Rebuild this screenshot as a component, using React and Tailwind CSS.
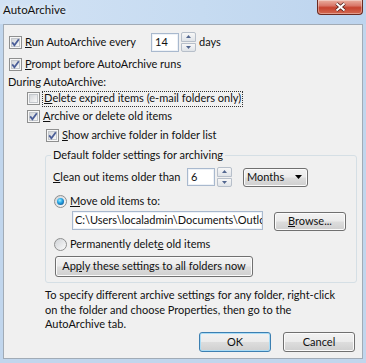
import React from "react";

function Check({ checked }) {
  return (
    <span className="grid w-[13px] h-[13px] shrink-0">
      <span className="col-start-1 row-start-1 border border-[#8e8f8f] bg-[#f7f7f7] p-[1px]">
        <span className="block w-full h-full border border-[#c3c7cc] bg-[linear-gradient(135deg,#d3d6da,#f8f8f8)]" />
      </span>
      {checked && (
        <svg
          className="col-start-1 row-start-1 self-center justify-self-center"
          width="11"
          height="11"
          viewBox="0 0 11 11"
        >
          <path d="M2.2 5.4 L4.4 8.2 L8.8 2.2" stroke="#4b5e98" strokeWidth="1.8" fill="none" />
        </svg>
      )}
    </span>
  );
}

function Radio({ checked }) {
  return (
    <span className="w-[13px] h-[13px] shrink-0 rounded-full border border-[#8e8f8f] bg-[linear-gradient(135deg,#cfd2d6,#fbfbfb)] flex items-center justify-center">
      {checked && (
        <span className="w-[7px] h-[7px] rounded-full bg-[radial-gradient(circle_at_40%_35%,#9ff0ff_0%,#27a6e6_40%,#0b3d78_100%)]" />
      )}
    </span>
  );
}

function TextBox({ className, children }) {
  return (
    <div
      className={`${className} flex items-center border border-[#a9b9ce] bg-white overflow-hidden whitespace-nowrap shadow-[inset_0_0_0_1px_#eef2f7]`}
    >
      {children}
    </div>
  );
}

function Spin() {
  return (
    <div className="ml-[2px] w-[15px] h-[20px] flex flex-col gap-[1px]">
      <div className="flex-1 border border-[#b7bfca] rounded-t-[2px] bg-[linear-gradient(#f7f7f7,#dfe3e8)] flex items-center justify-center">
        <svg width="5" height="3" viewBox="0 0 5 3">
          <path d="M0 3 L2.5 0 L5 3 Z" fill="#52668f" />
        </svg>
      </div>
      <div className="flex-1 border border-[#b7bfca] rounded-b-[2px] bg-[linear-gradient(#f7f7f7,#dfe3e8)] flex items-center justify-center">
        <svg width="5" height="3" viewBox="0 0 5 3">
          <path d="M0 0 L5 0 L2.5 3 Z" fill="#52668f" />
        </svg>
      </div>
    </div>
  );
}

function Btn({ def, className, children }) {
  return (
    <div
      className={`${className} flex items-center justify-center rounded-[3px] border ${
        def
          ? "border-[#3c7fb1] shadow-[inset_0_0_0_1px_#a9dcf6]"
          : "border-[#707070] shadow-[inset_0_0_0_1px_#fbfbfb]"
      } bg-[linear-gradient(#f2f2f2_0%,#ebebeb_49%,#dddddd_51%,#cfcfcf_100%)] whitespace-nowrap`}
    >
      {children}
    </div>
  );
}

export default function App() {
  return (
    <div className="w-[366px] h-[363px] flex flex-col bg-[#c1d6ed] font-['Lato',sans-serif] text-[11px] text-[#111111] overflow-hidden">
      {/* title bar */}
      <div className="h-[24px] flex items-start justify-between bg-[linear-gradient(90deg,#d2e2f4,#c6dbf1_55%,#bdd4ee)]">
        <span className="pl-[3px] pt-[2px] leading-[16px] text-[11.5px] [text-shadow:0_0_6px_#ffffff]">
          AutoArchive
        </span>
        <div className="mr-[3px] w-[46px] h-[15px] rounded-b-[4px] border border-t-0 border-[#6b2a20] bg-[linear-gradient(#eab0a0,#d9786a_40%,#c6432f_55%,#d46a52_100%)] shadow-[inset_0_0_0_1px_rgba(255,255,255,0.35)] flex items-center justify-center">
          <svg width="13" height="10" viewBox="0 0 13 10">
            <path d="M2.5 1.5 L10.5 8.5 M10.5 1.5 L2.5 8.5" stroke="#4a1c16" strokeWidth="3.6" fill="none" />
            <path d="M2.5 1.5 L10.5 8.5 M10.5 1.5 L2.5 8.5" stroke="#ffffff" strokeWidth="2" fill="none" />
          </svg>
        </div>
      </div>

      {/* client area */}
      <div className="mx-[3px] h-[335px] border border-[#a1abb6] bg-[#f0f0f0] flex flex-col">
        <div className="mt-[7px] ml-[5px] h-[20px] flex items-center">
          <Check checked />
          <span className="ml-[3px] w-[126px] whitespace-nowrap">
            <span className="underline">R</span>un AutoArchive every
          </span>
          <TextBox className="w-[28px] h-[19px] pl-[3px]">14</TextBox>
          <Spin />
          <span className="ml-[3px]">days</span>
        </div>

        <div className="mt-[2px] ml-[5px] h-[20px] flex items-center">
          <Check checked />
          <span className="ml-[3px] whitespace-nowrap">
            <span className="underline">P</span>rompt before AutoArchive runs
          </span>
        </div>

        <div className="ml-[4px] h-[16px] flex items-center">During AutoArchive:</div>

        <div className="ml-[23px] h-[17px] flex items-center">
          <Check />
          <span className="ml-[2px] h-[16px] flex items-center px-[1px] border border-dotted border-[#333333] whitespace-nowrap">
            <span className="underline">D</span>elete expired items (e-mail folders only)
          </span>
        </div>

        <div className="ml-[23px] h-[19px] flex items-center">
          <Check checked />
          <span className="ml-[3px] whitespace-nowrap">
            <span className="underline">A</span>rchive or delete old items
          </span>
        </div>

        <div className="ml-[42px] h-[19px] flex items-center">
          <Check checked />
          <span className="ml-[3px] whitespace-nowrap">
            <span className="underline">S</span>how archive folder in folder list
          </span>
        </div>

        <fieldset className="mt-[2px] ml-[41px] w-[312px] min-w-0 border border-[#d5dfe5] rounded-[3px] pb-[5px]">
          <legend className="ml-[5px] px-[2px] leading-[16px]">
            Default folder settings for archiving
          </legend>

          <div className="mt-[4px] ml-[7px] h-[20px] flex items-center">
            <span className="w-[134px] whitespace-nowrap">
              <span className="underline">C</span>lean out items older than
            </span>
            <TextBox className="w-[28px] h-[18px] pl-[3px]">6</TextBox>
            <Spin />
            <Btn className="ml-[11px] w-[65px] h-[19px] !justify-between pl-[3px] pr-[5px]">
              <span>Months</span>
              <svg width="7" height="4" viewBox="0 0 7 4">
                <path d="M0 0 L7 0 L3.5 4 Z" fill="#000000" />
              </svg>
            </Btn>
          </div>

          <div className="mt-[5px] ml-[8px] h-[19px] flex items-center">
            <Radio checked />
            <span className="ml-[3px] whitespace-nowrap">
              <span className="underline">M</span>ove old items to:
            </span>
          </div>

          <div className="ml-[26px] h-[20px] flex items-start">
            <TextBox className="w-[191px] h-[19px] pl-[2px]">
              <span>{"C:\\Users\\localadmin\\Documents\\Outloo"}</span>
            </TextBox>
            <Btn className="ml-[11px] mt-[1px] w-[72px] h-[19px]">
              <span>
                <span className="underline">B</span>rowse...
              </span>
            </Btn>
          </div>

          <div className="mt-[4px] ml-[8px] h-[18px] flex items-center">
            <Radio />
            <span className="ml-[3px] whitespace-nowrap">
              Permanently delet<span className="underline">e</span> old items
            </span>
          </div>

          <Btn className="mt-[3px] ml-[9px] w-[198px] h-[21px]">
            <span>
              Ap<span className="underline">p</span>ly these settings to all folders now
            </span>
          </Btn>
        </fieldset>

        <p className="mt-[5px] ml-[41px] leading-[14.5px] whitespace-nowrap">
          To specify different archive settings for any folder, right-click
          <br />
          on the folder and choose Properties, then go to the
          <br />
          AutoArchive tab.
        </p>

        <div className="mt-auto mb-[6px] mr-[7px] flex justify-end gap-[12px]">
          <Btn def className="w-[72px] h-[20px]">
            OK
          </Btn>
          <Btn className="w-[72px] h-[20px]">Cancel</Btn>
        </div>
      </div>
    </div>
  );
}
